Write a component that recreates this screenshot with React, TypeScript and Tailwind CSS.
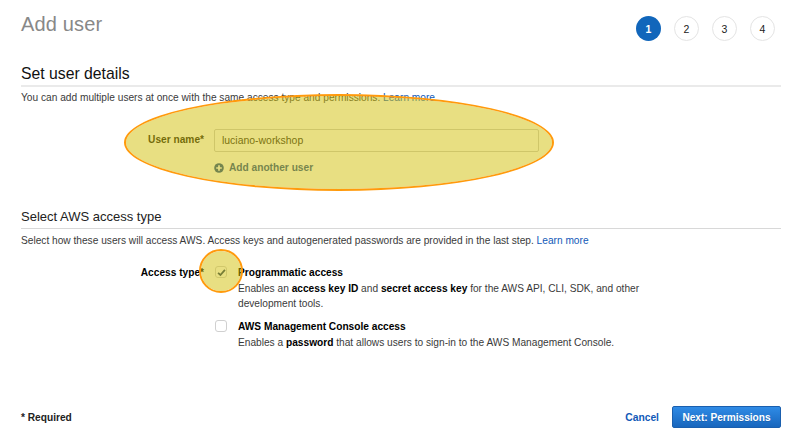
import type { ReactNode } from "react";

const steps = [1, 2, 3, 4];

function LearnMore() {
  return <a className="text-[#1159b8]">Learn more</a>;
}

function Option({ title, checked, children }: { title: string; checked?: boolean; children: ReactNode }) {
  return (
    <div className="flex">
      <span className="mt-px mr-[11px] flex h-3 w-3 shrink-0 items-center justify-center rounded-[3px] border border-[#d0d0d0] bg-white">
        {checked && (
          <svg viewBox="0 0 10 10" className="h-[9px] w-[9px]" fill="none" stroke="#1c3a66" strokeWidth="2">
            <path d="M1.2 5.4 3.8 7.8 8.8 2" />
          </svg>
        )}
      </span>
      <div>
        <div className="h-[16px] font-bold text-black">{title}</div>
        <div>{children}</div>
      </div>
    </div>
  );
}

export default function App() {
  return (
    <main className="relative h-[447px] w-[800px] overflow-hidden bg-white pt-3 pr-[19px] pl-[21px] font-['Liberation_Sans',Arial,sans-serif] text-[10.16px] leading-[15px] text-[#3a3a3a]">
      <header className="flex h-[53px] justify-between">
        <h1 className="text-[20px] leading-6 tracking-[0.15px] text-[#888]">Add user</h1>
        <ol className="mt-1 mr-[6px] flex gap-[13px] text-[10.5px]">
          {steps.map((n) => (
            <li
              key={n}
              className={
                n === 1
                  ? "flex h-[25px] w-[25px] items-center justify-center rounded-full bg-[#1166bb] pt-px font-bold text-white"
                  : "flex h-[25px] w-[25px] items-center justify-center rounded-full border border-[#e4e4e4] pt-px text-[#222]"
              }
            >
              {n}
            </li>
          ))}
        </ol>
      </header>

      <section className="h-[144px]">
        <h2 className="h-[22px] border-b-2 border-[#eaeaea] text-[15.75px] leading-[18px] text-[#111]">Set user details</h2>
        <p className="mt-[3px] whitespace-nowrap">
          You can add multiple users at once with the same access type and permissions. <LearnMore />
        </p>
        <div className="mt-[24px] flex">
          <label className="mr-[11px] w-[183px] pt-[3px] text-right font-bold text-[#111]">User name*</label>
          <div className="-ml-px">
            <div className="h-[23px] w-[325px] rounded-[2px] border border-[#ccc] px-[7px] text-[10.45px] leading-[21px] text-[#222]">luciano-workshop</div>
            <div className="mt-2 flex items-center gap-[5px] font-bold text-[#164a96]">
              <svg viewBox="0 0 10 10" className="h-[10px] w-[10px]">
                <circle cx="5" cy="5" r="4.8" fill="#164a96" />
                <path d="M5 2.2v5.6M2.2 5h5.6" stroke="white" strokeWidth="1.7" />
              </svg>
              <span>Add another user</span>
            </div>
          </div>
        </div>
      </section>

      <section>
        <h3 className="h-[20px] border-b border-[#d8d8d8] text-[13px] leading-4 text-[#222]">Select AWS access type</h3>
        <p className="mt-1 whitespace-nowrap">
          Select how these users will access AWS. Access keys and autogenerated passwords are provided in the last step.{" "}
          <LearnMore />
        </p>
        <div className="mt-[17px] flex">
          <div className="mr-[11px] w-[183px] text-right font-bold text-black">Access type*</div>
          <div className="flex flex-col gap-2">
            <Option title="Programmatic access" checked>
              Enables an <b className="text-black">access key ID</b> and <b className="text-black">secret access key</b> for the AWS API, CLI, SDK, and other
              <br />
              development tools.
            </Option>
            <Option title="AWS Management Console access">
              Enables a <b className="text-black">password</b> that allows users to sign-in to the AWS Management Console.
            </Option>
          </div>
        </div>
      </section>

      <footer className="mt-[56px] flex items-center font-bold">
        <span className="text-[#222]">* Required</span>
        <a className="mr-[13px] ml-auto text-[10.3px] text-[#1159b8]">Cancel</a>
        <button className="h-[22px] w-[109px] rounded-[2px] border border-[#1a5fae] bg-linear-to-b from-[#2f8be6] to-[#1866bd] text-[10.1px] text-white text-shadow-2xs">
          Next: Permissions
        </button>
      </footer>

      <div className="absolute top-[94px] left-[124px] h-[97px] w-[430px] rounded-[50%] border-2 border-[#ff9a0c] bg-[#d1bf05]/50 bg-clip-padding" />
      <div className="absolute top-[249px] left-[199px] h-11 w-11 rounded-full border-2 border-[#ff9a0c] bg-[#d1bf05]/50 bg-clip-padding" />
    </main>
  );
}
